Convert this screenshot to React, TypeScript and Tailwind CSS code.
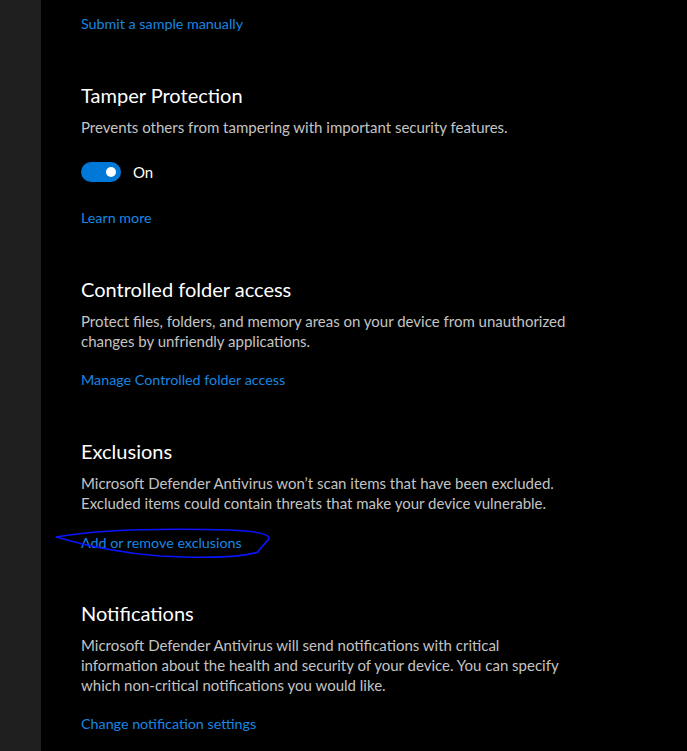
const font = { fontFamily: '"Segoe UI", Lato, "Noto Sans", sans-serif' };

const Heading = ({ children }: { children: React.ReactNode }) => (
  <h2 className="text-[20px] leading-[28px] text-white font-normal">{children}</h2>
);

const Desc = ({ lines }: { lines: string[] }) => (
  <div className="mt-[8px] text-[15px] leading-[20px] text-[#c4c4c4]">
    {lines.map((l, i) => (
      <div key={i} className="whitespace-nowrap">
        {l}
      </div>
    ))}
  </div>
);

const Link = ({ children, className = "" }: { children: React.ReactNode; className?: string }) => (
  <a className={`block text-[14.3px] leading-[20px] text-[#1a86e0] ${className}`}>{children}</a>
);

export default function App() {
  return (
    <div className="flex h-[751px] w-full overflow-hidden bg-black" style={font}>
      <div className="w-[41px] shrink-0 bg-[#1f1f1f]" />
      <div className="relative flex-1 pl-[40px] pt-[14px]">
        <Link>Submit a sample manually</Link>

        <section className="mt-[47px]">
          <Heading>Tamper Protection</Heading>
          <Desc lines={["Prevents others from tampering with important security features."]} />
          <div className="mt-[25px] flex items-center gap-3">
            <div className="relative h-[20px] w-[40px] rounded-full bg-[#0078d7]">
              <div className="absolute right-[5px] top-[5px] h-[10px] w-[10px] rounded-full bg-white" />
            </div>
            <span className="text-[15px] leading-[20px] text-white">On</span>
          </div>
          <Link className="mt-[26px]">Learn more</Link>
        </section>

        <section className="mt-[47px]">
          <Heading>Controlled folder access</Heading>
          <Desc
            lines={[
              "Protect files, folders, and memory areas on your device from unauthorized",
              "changes by unfriendly applications.",
            ]}
          />
          <Link className="mt-[19px]">Manage Controlled folder access</Link>
        </section>

        <section className="mt-[47px]">
          <Heading>Exclusions</Heading>
          <Desc
            lines={[
              "Microsoft Defender Antivirus won’t scan items that have been excluded.",
              "Excluded items could contain threats that make your device vulnerable.",
            ]}
          />
          <Link className="mt-[20px]">Add or remove exclusions</Link>
        </section>

        <section className="mt-[46px]">
          <Heading>Notifications</Heading>
          <Desc
            lines={[
              "Microsoft Defender Antivirus will send notifications with critical",
              "information about the health and security of your device. You can specify",
              "which non-critical notifications you would like.",
            ]}
          />
          <Link className="mt-[19px]">Change notification settings</Link>
        </section>

        <svg
          className="pointer-events-none absolute left-[-41px] top-0"
          width="687"
          height="751"
          viewBox="0 0 687 751"
          fill="none"
        >
          <path
            d="M56 537 C 95 530, 160 528, 230 530 C 255 531, 268 534, 269 538 C 268 542, 262 545, 258 552 C 240 558, 200 558, 160 556 C 120 553, 90 547, 56 537 Z"
            stroke="#0a14ff"
            strokeWidth="1.6"
          />
        </svg>
      </div>
    </div>
  );
}
